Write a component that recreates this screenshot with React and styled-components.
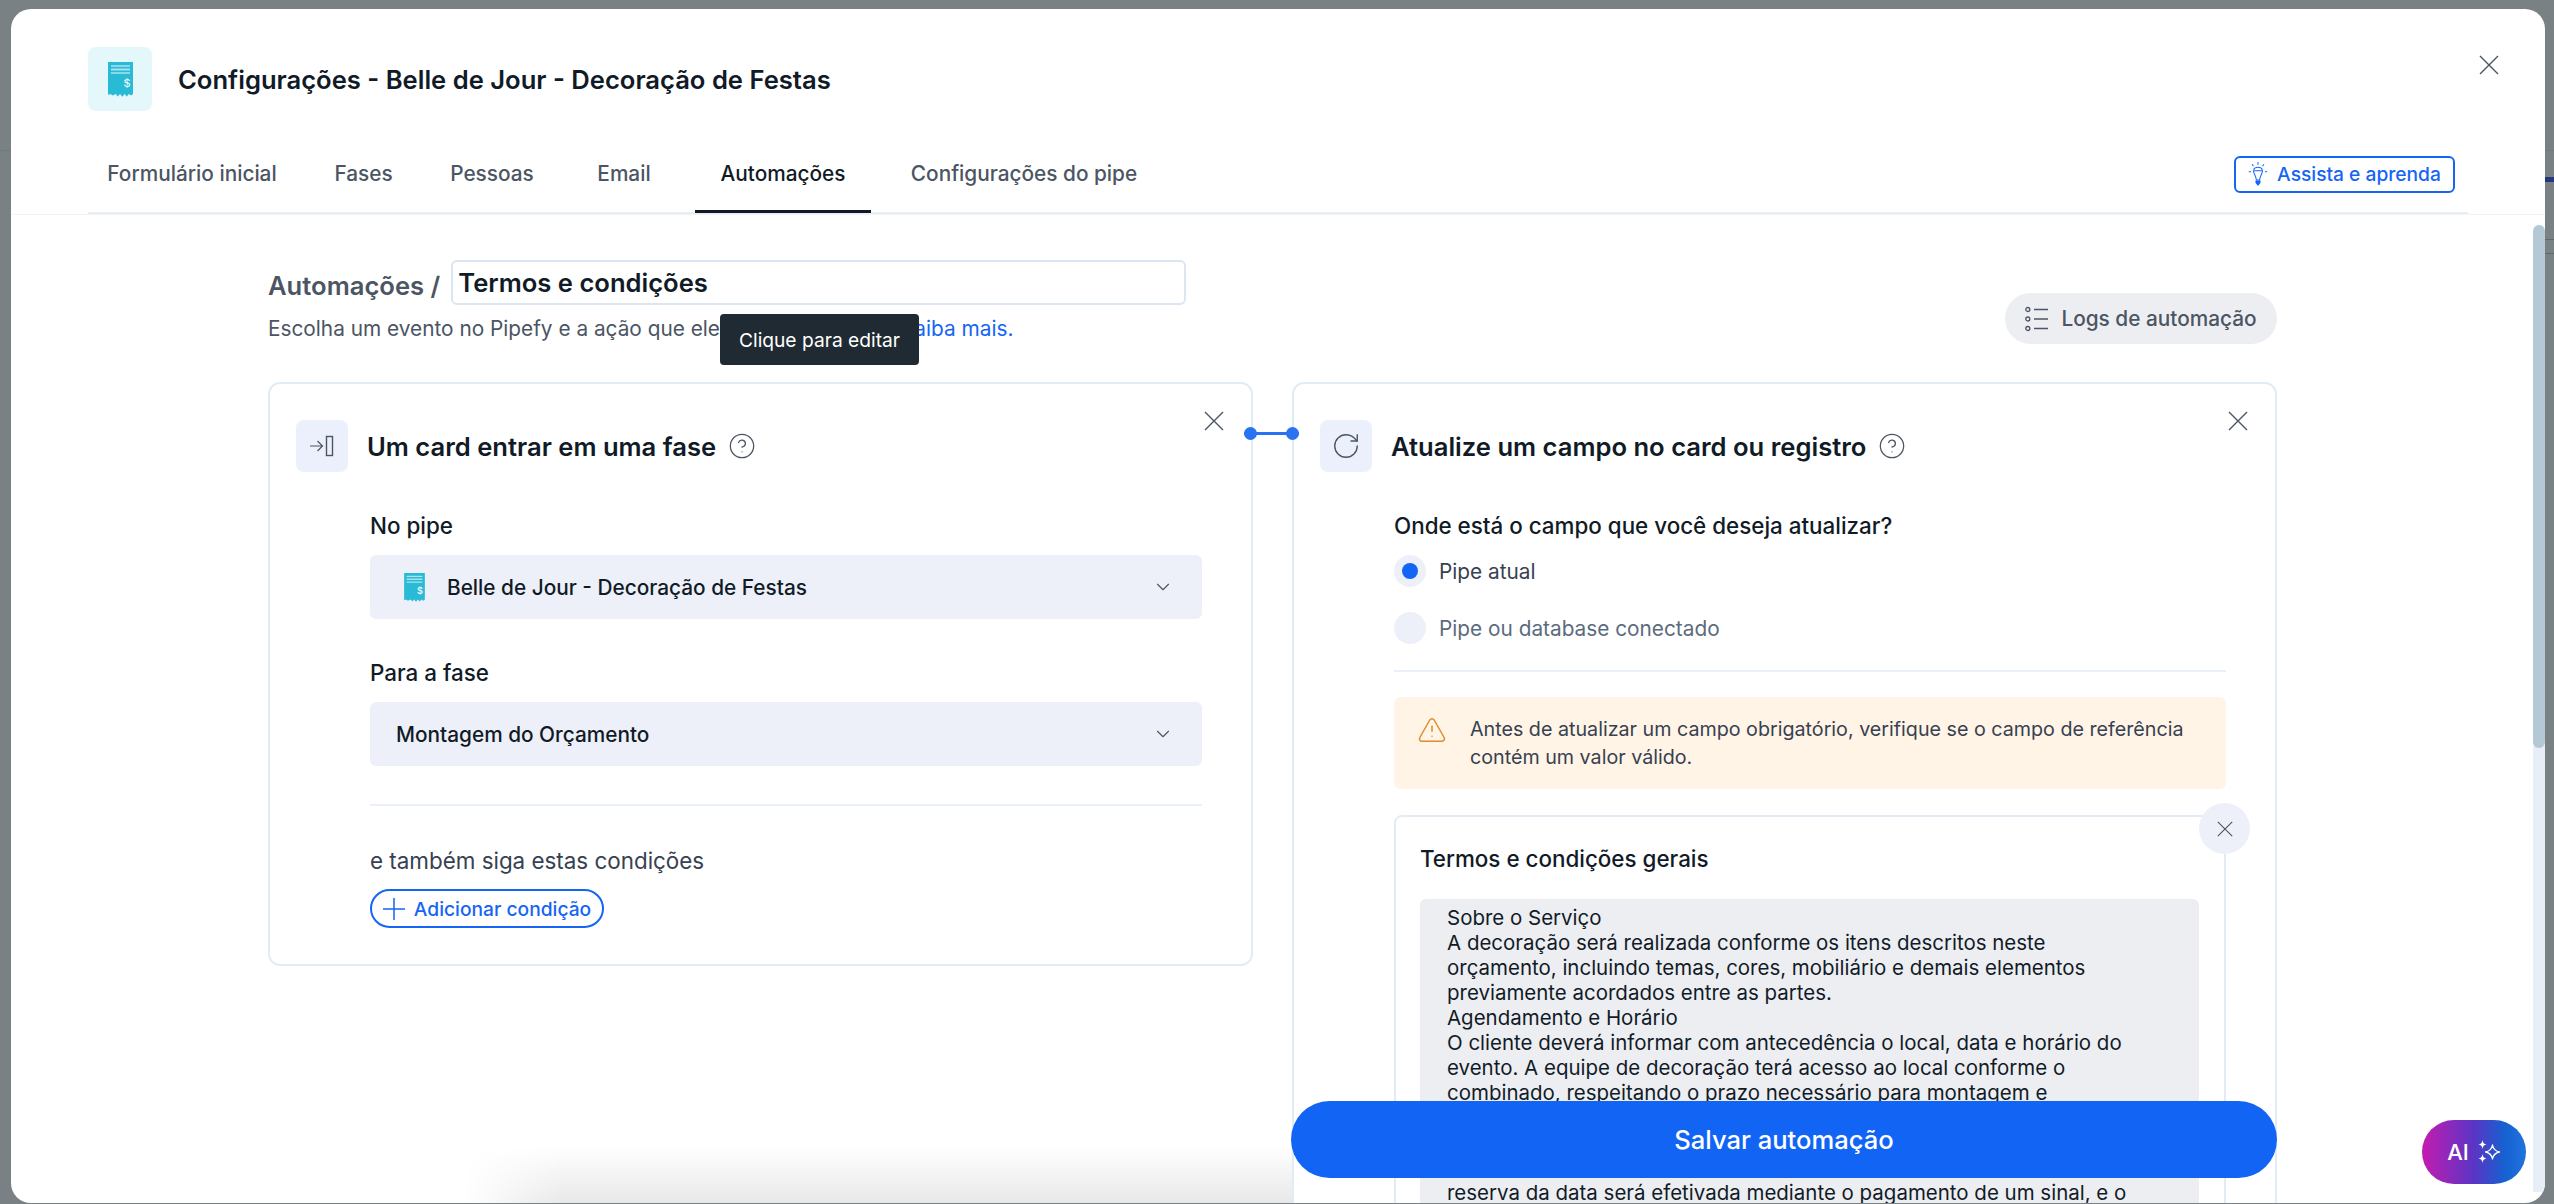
import React from 'react'
import styled, { createGlobalStyle } from 'styled-components'
import { CircleHelp, ChevronDown, RotateCw, TriangleAlert } from 'lucide-react'

const TERMS = [
  'Sobre o Serviço',
  'A decoração será realizada conforme os itens descritos neste',
  'orçamento, incluindo temas, cores, mobiliário e demais elementos',
  'previamente acordados entre as partes.',
  'Agendamento e Horário',
  'O cliente deverá informar com antecedência o local, data e horário do',
  'evento. A equipe de decoração terá acesso ao local conforme o',
  'combinado, respeitando o prazo necessário para montagem e',
  '\u00a0',
  '\u00a0',
  '\u00a0',
  'reserva da data será efetivada mediante o pagamento de um sinal, e o',
]

const TABS = [
  { label: 'Formulário inicial', width: 208 },
  { label: 'Fases', width: 135 },
  { label: 'Pessoas', width: 122 },
  { label: 'Email', width: 142 },
  { label: 'Automações', width: 176, active: true },
  { label: 'Configurações do pipe', width: 306 },
]

function CloseIcon({ size = 20 }) {
  return (
    <svg width={size} height={size} viewBox="0 0 20 20" fill="none" stroke="currentColor" strokeWidth="1.4">
      <path d="M1 1l18 18M19 1L1 19" />
    </svg>
  )
}

function ReceiptIcon({ width, height }) {
  return (
    <svg width={width} height={height} viewBox="0 0 25 35">
      <path
        d="M0 0h25v32l-2 1.6-2.2-1.6-2 2.4-2.2-2.4-2.300 2.800-2.300-2.800-2.200 2.400-2-2.400L4.600 33.600 2.400 32 0 33z"
        fill="#29bbd6"
      />
      <path d="M3 4h19" stroke="#fff" strokeWidth="0.9" />
      <path d="M3 7.500h19" stroke="#a6e3ee" strokeWidth="1.800" />
      <path d="M3 11h19" stroke="#fff" strokeWidth="0.9" />
      <text x="19" y="25" textAnchor="middle" fontSize="11" fontFamily="Inter, sans-serif" fill="#fff">$</text>
    </svg>
  )
}

function EnterIcon() {
  return (
    <svg width="24" height="24" viewBox="0 0 24 24" fill="none" stroke="#4b5563" strokeWidth="1.2">
      <path d="M0 12h12M7.500 7l5 5-5 5" />
      <rect x="16.500" y="2.500" width="6" height="19" strokeWidth="1.400" />
    </svg>
  )
}

function BulbIcon() {
  return (
    <svg width="20" height="24" viewBox="0 0 20 26" fill="none" stroke="#1565f5" strokeWidth="1.100">
      <path d="M5 9.500h10c0 2.800-2.700 5-3.300 10H8.300C7.700 14.500 5 12.300 5 9.500z" />
      <path d="M5.200 8.500C6 6.500 8 5.800 10 5.800s4 .7 4.800 2.700" />
      <path d="M10 0v3M3.500 2.500l1.600 2M16.500 2.500l-1.600 2M0 10.500h2.500M17.500 10.500H20" />
      <path d="M7.800 20.500h4.400v1.800L10 25l-2.200-2.700z" fill="#1565f5" />
    </svg>
  )
}

function LogsIcon() {
  return (
    <svg width="24" height="26" viewBox="0 0 24 26" fill="none" stroke="#4b5563" strokeWidth="1.300">
      <circle cx="2.800" cy="3.500" r="2" />
      <circle cx="2.800" cy="13" r="2" />
      <circle cx="2.800" cy="22.500" r="2" />
      <path d="M9 3.500h14M9 13h14M9 22.500h14" />
    </svg>
  )
}

function PlusIcon() {
  return (
    <svg width="22" height="22" viewBox="0 0 22 22" fill="none" stroke="#1565f5" strokeWidth="1.500">
      <path d="M11 0v22M0 11h22" />
    </svg>
  )
}

function SparkIcon() {
  return (
    <svg width="24" height="24" viewBox="0 0 24 24">
      <path d="M5.500 0c.5 3 1.500 4 4 4.500-2.500.5-3.500 1.500-4 4.500-.5-3-1.500-4-4-4.500 2.500-.5 3.500-1.500 4-4.500z" fill="#fff" />
      <path d="M5.500 14c.5 3 1.500 4 4 4.500-2.500.5-3.500 1.500-4 4.500-.5-3-1.500-4-4-4.500 2.500-.5 3.500-1.500 4-4.500z" fill="#fff" />
      <path d="M15.500 5c.7 4 2.300 6 7 7-4.700 1-6.300 3-7 7-.7-4-2.300-6-7-7 4.700-1 6.300-3 7-7z" fill="none" stroke="#fff" strokeWidth="1.300" strokeLinejoin="round" />
    </svg>
  )
}

export default function App() {
  return (
    <>
      <GlobalStyle />
      <Backdrop>
        <LinhaFundo $top={150} $height={1} $color="#6f7a80" />
        <LinhaFundo $top={177} $height={5} $color="#24387c" $direita />
        <LinhaFundo $top={239} $height={1} $color="#5f686d" $direita />
        <LinhaFundo $top={253} $height={1} $color="#5f686d" $direita />
        <Modal>
          <FecharModal><CloseIcon /></FecharModal>
          <Cabecalho>
            <IconeBox $bg="#e4f7fb" $size={64}>
              <ReceiptIcon width={25} height={35} />
            </IconeBox>
            <h1>Configurações - Belle de Jour - Decoração de Festas</h1>
          </Cabecalho>
          <Abas>
            {TABS.map((t) => (
              <Aba key={t.label} $width={t.width} $active={t.active}>{t.label}</Aba>
            ))}
            <AssistaBotao><BulbIcon />Assista e aprenda</AssistaBotao>
          </Abas>

          <Corpo>
            <Intro>
              <div>
                <LinhaTitulo>
                  <h2>Automações /</h2>
                  <NomeInput>Termos e condições</NomeInput>
                </LinhaTitulo>
                <Descricao>
                  Escolha um evento no Pipefy e a ação que ele deve concretizar. <a>Saiba mais.</a>
                </Descricao>
              </div>
              <LogsBotao><LogsIcon />Logs de automação</LogsBotao>
            </Intro>

            <Colunas>
              <Card>
                <FecharCard><CloseIcon /></FecharCard>
                <Conector />
                <CardTitulo>
                  <IconeBox $bg="#ecf0fd" $size={52}><EnterIcon /></IconeBox>
                  <h3>Um card entrar em uma fase</h3>
                  <CircleHelp size={28} strokeWidth={1.1} color="#4b5563" />
                </CardTitulo>
                <CardConteudo>
                  <Rotulo>No pipe</Rotulo>
                  <Select>
                    <ReceiptIcon width={21} height={29} />
                    <span>Belle de Jour - Decoração de Festas</span>
                    <ChevronDown size={22} strokeWidth={1.25} color="#4b5563" />
                  </Select>
                  <Rotulo $top={40}>Para a fase</Rotulo>
                  <Select>
                    <span>Montagem do Orçamento</span>
                    <ChevronDown size={22} strokeWidth={1.25} color="#4b5563" />
                  </Select>
                  <Divisor $top={38} />
                  <Condicoes>e também siga estas condições</Condicoes>
                  <AdicionarBotao><PlusIcon />Adicionar condição</AdicionarBotao>
                </CardConteudo>
              </Card>

              <Card $aberto>
                <FecharCard><CloseIcon /></FecharCard>
                <CardTitulo>
                  <IconeBox $bg="#ecf0fd" $size={52}>
                    <RotateCw size={30} strokeWidth={1.1} color="#4b5563" />
                  </IconeBox>
                  <h3>Atualize um campo no card ou registro</h3>
                  <CircleHelp size={28} strokeWidth={1.1} color="#4b5563" />
                </CardTitulo>
                <CardConteudo>
                  <Rotulo>Onde está o campo que você deseja atualizar?</Rotulo>
                  <Radio $checked>Pipe atual</Radio>
                  <Radio>Pipe ou database conectado</Radio>
                  <Divisor $top={26} />
                  <Aviso>
                    <TriangleAlert size={30} strokeWidth={1.2} color="#d98e2b" />
                    <p>Antes de atualizar um campo obrigatório, verifique se o campo de referência contém um valor válido.</p>
                  </Aviso>
                  <Campo>
                    <FecharCampo><CloseIcon size={16} /></FecharCampo>
                    <h4>Termos e condições gerais</h4>
                    <Texto>
                      {TERMS.map((linha, i) => <div key={i}>{linha}</div>)}
                    </Texto>
                  </Campo>
                </CardConteudo>
              </Card>
            </Colunas>
          </Corpo>

          <SombraRodape />
          <Tooltip>Clique para editar</Tooltip>
          <BarraRolagem><span /></BarraRolagem>
          <SalvarBotao>Salvar automação</SalvarBotao>
          <AiBotao>AI<SparkIcon /></AiBotao>
        </Modal>
      </Backdrop>
    </>
  )
}

const GlobalStyle = createGlobalStyle`
  * {
    box-sizing: border-box;
  }
  html, body {
    margin: 0;
    height: 100%;
    overflow: hidden;
    font-family: Inter, "Noto Sans", sans-serif;
  }
`

const Backdrop = styled.div`
  position: relative;
  width: 2554px;
  height: 1204px;
  padding: 9px 9px 1px 11px;
  background: #7a8184;
`

const LinhaFundo = styled.div`
  position: absolute;
  left: ${(p) => (p.$direita ? '2530px' : '0')};
  right: 0;
  top: ${(p) => p.$top}px;
  height: ${(p) => p.$height}px;
  background: ${(p) => p.$color};
`

const Modal = styled.div`
  position: relative;
  width: 100%;
  height: 100%;
  display: flex;
  flex-direction: column;
  background: #fff;
  border-radius: 20px;
  overflow: hidden;
`

const FecharModal = styled.div`
  position: absolute;
  top: 46px;
  right: 46px;
  color: #4b5563;
  display: flex;
`

const Cabecalho = styled.div`
  display: flex;
  align-items: center;
  gap: 26px;
  padding: 38px 77px 0;

  h1 {
    margin: 0;
    font-size: 25.6px;
    font-weight: 600;
    color: #111b27;
  }
`

const IconeBox = styled.div`
  width: ${(p) => p.$size}px;
  height: ${(p) => p.$size}px;
  flex-shrink: 0;
  display: flex;
  align-items: center;
  justify-content: center;
  background: ${(p) => p.$bg};
  border-radius: 8px;
`

const Abas = styled.div`
  display: flex;
  align-items: stretch;
  height: 78px;
  margin: 25px 77px 0 77px;
  padding-right: 13px;
  border-bottom: 2px solid #e9eef5;
`

const Aba = styled.div`
  width: ${(p) => p.$width}px;
  margin-bottom: -1px;
  display: flex;
  align-items: center;
  justify-content: center;
  font-size: 20.8px;
  font-weight: 500;
  color: ${(p) => (p.$active ? '#111b27' : '#4b5563')};
  border-bottom: 3px solid ${(p) => (p.$active ? '#111b27' : 'transparent')};
`

const AssistaBotao = styled.button`
  margin: auto 0 auto auto;
  height: 37px;
  width: 221px;
  display: flex;
  align-items: center;
  justify-content: center;
  gap: 9px;
  padding: 0;
  background: #fff;
  border: 2px solid #1565f5;
  border-radius: 6px;
  color: #1565f5;
  font-family: inherit;
  font-size: 19.2px;
  font-weight: 500;
`

const Corpo = styled.div`
  flex: 1;
  min-height: 0;
  overflow: hidden;
  padding: 45px 268px 0 257px;
  border-top: 1px solid #f0f3f8;
`

const Intro = styled.div`
  display: flex;
  justify-content: space-between;
  align-items: flex-end;
`

const LinhaTitulo = styled.div`
  display: flex;
  align-items: center;
  gap: 11px;

  h2 {
    margin: 5px 0 0;
    font-size: 25.6px;
    font-weight: 600;
    color: #4b5563;
    white-space: nowrap;
  }
`

const NomeInput = styled.div`
  width: 735px;
  height: 45px;
  padding: 0 5px;
  display: flex;
  align-items: center;
  border: 2px solid #dbe6f2;
  border-radius: 6px;
  font-size: 25.6px;
  font-weight: 600;
  color: #111b27;
`

const Descricao = styled.div`
  margin-top: 12px;
  padding-bottom: 3px;
  font-size: 20.8px;
  line-height: 24px;
  color: #4b5563;

  a {
    color: #1565f5;
  }
`

const LogsBotao = styled.button`
  width: 272px;
  height: 51px;
  display: flex;
  align-items: center;
  justify-content: center;
  gap: 12px;
  padding: 0;
  background: #edeef2;
  border: 0;
  border-radius: 26px;
  color: #4b5563;
  font-family: inherit;
  font-size: 20.8px;
  font-weight: 500;
`

const Colunas = styled.div`
  display: grid;
  grid-template-columns: 985px 985px;
  gap: 39px;
  margin-top: 38px;
  align-items: start;
`

const Card = styled.div`
  position: relative;
  padding: 36px 49px 36px 26px;
  background: #fff;
  border: 2px solid #e1ecf7;
  border-radius: 12px;
  height: ${(p) => (p.$aberto ? '900px' : 'auto')};
`

const FecharCard = styled.div`
  position: absolute;
  top: 27px;
  right: 27px;
  color: #4b5563;
  display: flex;
`

const Conector = styled.div`
  position: absolute;
  top: 48px;
  left: 974px;
  width: 55px;
  height: 3px;
  background: #2a73f0;
  z-index: 2;

  &::before,
  &::after {
    content: '';
    position: absolute;
    top: -5px;
    width: 13px;
    height: 13px;
    border-radius: 50%;
    background: #2a73f0;
  }
  &::before {
    left: 0;
  }
  &::after {
    right: 0;
  }
`

const CardTitulo = styled.div`
  display: flex;
  align-items: center;

  h3 {
    margin: 0 12px 0 19px;
    font-size: 25.6px;
    font-weight: 600;
    color: #111b27;
  }
`

const CardConteudo = styled.div`
  padding-left: 74px;
  margin-top: 40px;
`

const Rotulo = styled.div`
  margin-top: ${(p) => (p.$top ? p.$top : 0)}px;
  font-size: 22.4px;
  line-height: 28px;
  font-weight: 500;
  color: #111b27;
`

const Select = styled.div`
  height: 64px;
  margin-top: 15px;
  padding: 0 28px 0 26px;
  display: flex;
  align-items: center;
  gap: 22px;
  background: #edf0f8;
  border-radius: 6px;
  font-size: 20.8px;
  font-weight: 500;
  color: #111b27;

  svg:first-child {
    margin-left: 8px;
  }
  span {
    flex: 1;
  }
`

const Divisor = styled.div`
  height: 2px;
  margin-top: ${(p) => p.$top}px;
  background: #e9f0f9;
`

const Condicoes = styled.div`
  margin-top: 41px;
  font-size: 22.4px;
  line-height: 28px;
  color: #374151;
`

const AdicionarBotao = styled.button`
  height: 39px;
  width: 234px;
  margin-top: 14px;
  display: flex;
  align-items: center;
  justify-content: center;
  gap: 9px;
  padding: 0;
  background: #fff;
  border: 2px solid #1565f5;
  border-radius: 20px;
  color: #1565f5;
  font-family: inherit;
  font-size: 19.2px;
  font-weight: 500;
`

const Radio = styled.div`
  height: 32px;
  margin-top: ${(p) => (p.$checked ? 15 : 25)}px;
  position: relative;
  display: flex;
  align-items: center;
  padding-left: 45px;
  font-size: 20.8px;
  color: ${(p) => (p.$checked ? '#374151' : '#5b6b7d')};

  &::before {
    content: '';
    position: absolute;
    left: 0;
    top: 0;
    width: 32px;
    height: 32px;
    border-radius: 50%;
    background: #edf0f8;
  }
  &::after {
    content: '';
    display: ${(p) => (p.$checked ? 'block' : 'none')};
    position: absolute;
    left: 8px;
    top: 8px;
    width: 16px;
    height: 16px;
    border-radius: 50%;
    background: #1565f5;
  }
`

const Aviso = styled.div`
  height: 92px;
  margin-top: 25px;
  padding: 18px 24px 18px 23px;
  display: flex;
  gap: 23px;
  background: #fff4e5;
  border-radius: 6px;

  svg {
    flex-shrink: 0;
  }
  p {
    margin: 0;
    font-size: 19.7px;
    line-height: 28px;
    color: #374151;
  }
`

const Campo = styled.div`
  position: relative;
  margin-top: 26px;
  padding: 26px 25px 0 24px;
  height: 500px;
  border: 2px solid #e3ebf4;
  border-radius: 8px;

  h4 {
    margin: 0;
    font-size: 22.4px;
    line-height: 32px;
    font-weight: 500;
    color: #111b27;
  }
`

const FecharCampo = styled.div`
  position: absolute;
  top: -14px;
  right: -26px;
  width: 51px;
  height: 51px;
  display: flex;
  align-items: center;
  justify-content: center;
  background: #edf0f8;
  border-radius: 50%;
  color: #4b5563;
`

const Texto = styled.div`
  margin-top: 24px;
  padding: 6px 20px 0 27px;
  background: #edeef2;
  border-radius: 6px 6px 0 0;
  font-size: 20.48px;
  line-height: 25px;
  color: #111b27;
  white-space: nowrap;
`

const SombraRodape = styled.div`
  position: absolute;
  left: 453px;
  top: 1138px;
  width: 828px;
  height: 56px;
  background: linear-gradient(to bottom, rgba(0, 0, 0, 0), rgba(0, 0, 0, 0.09));
  mask-image: linear-gradient(to right, transparent, #000 100px);
`

const Tooltip = styled.div`
  position: absolute;
  left: 709px;
  top: 305px;
  width: 199px;
  height: 51px;
  display: flex;
  align-items: center;
  justify-content: center;
  background: #1f2a33;
  border-radius: 4px;
  color: #fff;
  font-size: 19.2px;
`

const BarraRolagem = styled.div`
  position: absolute;
  right: 0;
  top: 216px;
  bottom: 11px;
  width: 12px;
  background: linear-gradient(to bottom, #fff 50px, #e8eef8 50px);

  span {
    display: block;
    height: 523px;
    background: #b5c8d6;
    border-radius: 6px;
  }
`

const SalvarBotao = styled.button`
  position: absolute;
  left: 1280px;
  top: 1092px;
  width: 986px;
  height: 77px;
  padding: 0;
  background: #1264f5;
  border: 0;
  border-radius: 39px;
  color: #fff;
  font-family: inherit;
  font-size: 25.6px;
  font-weight: 500;
`

const AiBotao = styled.button`
  position: absolute;
  left: 2411px;
  top: 1111px;
  width: 104px;
  height: 64px;
  display: flex;
  align-items: center;
  justify-content: center;
  gap: 8px;
  padding: 0;
  background: linear-gradient(90deg, #c41cb0, #5a35c5 50%, #1562d0 80%, #2272e0);
  border: 0;
  border-radius: 32px;
  color: #fff;
  font-family: inherit;
  font-size: 22px;
  font-weight: 500;
`
